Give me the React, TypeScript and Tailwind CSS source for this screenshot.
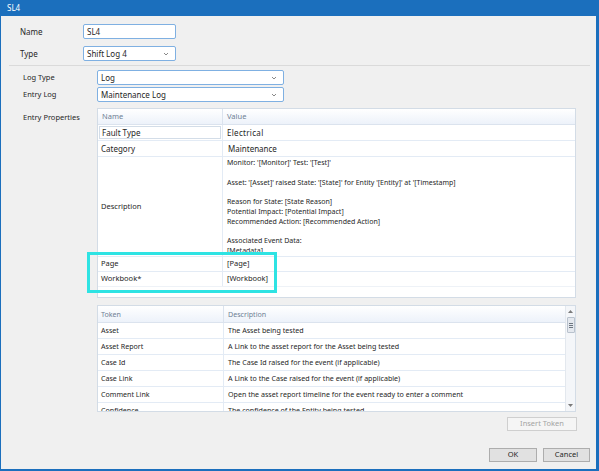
import React from 'react';

const Chevron = () => (
  <svg width="6" height="4" viewBox="0 0 6 4" className="shrink-0">
    <path d="M1 1l2 2 2-2" fill="none" stroke="#6b6b6b" strokeWidth="0.8" />
  </svg>
);

function Field({ value, w, combo }: { value: string; w: string; combo?: boolean }) {
  return (
    <div className={`${w} h-[15px] bg-white border border-[#7fb0e2] rounded-[2px] flex items-center justify-between pl-[3px] pr-[6px] text-[8px] text-[#262626]`}>
      <span>{value}</span>
      {combo && <Chevron />}
    </div>
  );
}

const descLines = [
  "Monitor: '[Monitor]' Test: '[Test]'",
  '',
  "Asset: '[Asset]' raised State: '[State]' for Entity '[Entity]' at '[Timestamp]",
  '',
  'Reason for State: [State Reason]',
  'Potential Impact: [Potential Impact]',
  'Recommended Action: [Recommended Action]',
  '',
  'Associated Event Data:',
  '[Metadata]',
];

const tokens = [
  ['Asset', 'The Asset being tested'],
  ['Asset Report', 'A Link to the asset report for the Asset being tested'],
  ['Case Id', 'The Case Id raised for the event (if applicable)'],
  ['Case Link', 'A Link to the Case raised for the event (if applicable)'],
  ['Comment Link', 'Open the asset report timeline for the event ready to enter a comment'],
  ['Confidence', 'The confidence of the Entity being tested'],
];

export default function App() {
  return (
    <div className="w-[599px] h-[471px] bg-[#1b6fbd] flex flex-col font-['Noto_Sans','Open_Sans',sans-serif] overflow-hidden">
      <div className="h-[16px] shrink-0 flex items-center pl-[7px] text-[8px] text-white">SL4</div>

      <div className="flex-1 ml-[1px] mr-[3px] mb-[2px] bg-[#f0f0f0] relative flex flex-col">
        {/* Name / Type */}
        <div className="mt-[8px] pl-[19px] flex items-center">
          <div className="w-[63px] text-[8px] text-[#262626]">Name</div>
          <Field value="SL4" w="w-[93px]" />
        </div>
        <div className="mt-[7px] pl-[19px] flex items-center">
          <div className="w-[63px] text-[8px] text-[#262626]">Type</div>
          <Field value="Shift Log 4" w="w-[93px]" combo />
        </div>

        <div className="mt-[4px] ml-[8px] mr-[6px] h-px bg-[#dadada]" />

        {/* Log Type / Entry Log */}
        <div className="mt-[4px] pl-[22px] flex items-center">
          <div className="w-[74px] text-[7.5px] text-[#262626]">Log Type</div>
          <Field value="Log" w="w-[187px]" combo />
        </div>
        <div className="mt-[2px] pl-[22px] flex items-center">
          <div className="w-[74px] text-[7.5px] text-[#262626]">Entry Log</div>
          <Field value="Maintenance Log" w="w-[187px]" combo />
        </div>

        {/* Entry Properties */}
        <div className="mt-[6px] pl-[22px] flex">
          <div className="w-[74px] pt-[4px] text-[7.5px] text-[#262626]">Entry Properties</div>
          <div className="w-[480px] flex flex-col">
            {/* properties table */}
            <div className="w-[479px] h-[190px] bg-white border border-[#d3dce6] flex flex-col overflow-hidden text-[7.5px] text-[#262626]">
              <div className="h-[16px] shrink-0 flex bg-gradient-to-b from-white to-[#edf2fa] border-b border-[#dbe3ee] text-[#6f7f94]">
                <div className="w-[125px] border-r border-[#dbe3ee] pl-[4px] flex items-center">Name</div>
                <div className="flex-1 pl-[4px] flex items-center">Value</div>
              </div>
              <div className="h-[16px] shrink-0 flex border-b border-[#e3ebf5]">
                <div className="w-[125px] border-r border-[#e3ebf5] p-[1px]">
                  <div className="h-full border border-[#d3dde8] bg-white pl-[2px] flex items-center text-[8px]">Fault Type</div>
                </div>
                <div className="flex-1 pl-[4px] flex items-center text-[8px] tracking-[0.3px]">Electrical</div>
              </div>
              <div className="h-[16px] shrink-0 flex border-b border-[#e3ebf5] text-[8px]">
                <div className="w-[125px] border-r border-[#e3ebf5] pl-[3px] flex items-center">Category</div>
                <div className="flex-1 pl-[5px] flex items-center">Maintenance</div>
              </div>
              <div className="h-[100px] shrink-0 flex border-b border-[#e3ebf5]">
                <div className="w-[125px] border-r border-[#e3ebf5] pl-[3px] flex items-center">Description</div>
                <div className="flex-1 pl-[4px] pt-[1px] overflow-hidden text-[7px] leading-[9.8px]">
                  {descLines.map((l, i) => (
                    <div key={i} className="h-[9.8px] whitespace-nowrap">{l}</div>
                  ))}
                </div>
              </div>
              <div className="h-[15px] shrink-0 flex border-b border-[#e3ebf5]">
                <div className="w-[125px] border-r border-[#e3ebf5] pl-[3px] flex items-center">Page</div>
                <div className="flex-1 pl-[4px] flex items-center">[Page]</div>
              </div>
              <div className="h-[15px] shrink-0 flex border-b border-[#eef2f7]">
                <div className="w-[125px] border-r border-[#e3ebf5] pl-[3px] flex items-center">Workbook*</div>
                <div className="flex-1 pl-[4px] flex items-center">[Workbook]</div>
              </div>
            </div>

            {/* token table */}
            <div className="mt-[7px] w-[479px] h-[107px] bg-white border border-[#d3dce6] flex overflow-hidden text-[7.1px] text-[#262626]">
              <div className="flex-1 flex flex-col overflow-hidden">
                <div className="h-[17px] shrink-0 flex bg-gradient-to-b from-white to-[#edf2fa] border-b border-[#dbe3ee] text-[#6f7f94]">
                  <div className="w-[126px] border-r border-[#dbe3ee] pl-[3px] flex items-center">Token</div>
                  <div className="flex-1 pl-[4px] flex items-center">Description</div>
                </div>
                {tokens.map(([t, d]) => (
                  <div key={t} className="h-[16px] shrink-0 flex border-b border-[#e3ebf5]">
                    <div className="w-[126px] border-r border-[#e3ebf5] pl-[3px] flex items-center whitespace-nowrap">{t}</div>
                    <div className="flex-1 pl-[4px] flex items-center whitespace-nowrap">{d}</div>
                  </div>
                ))}
              </div>
              <div className="w-[10px] shrink-0 bg-[#f4f6f9] border-l border-[#e3e8ee] flex flex-col items-center">
                <div className="h-[11px] flex items-center justify-center">
                  <svg width="5" height="3" viewBox="0 0 5 3"><path d="M0 3L2.5 0 5 3z" fill="#7a7a7a" /></svg>
                </div>
                <div className="w-[8px] h-[16px] bg-[#e4e8ee] border border-[#b9c2cd] rounded-[1px] flex flex-col items-center justify-center gap-[1px]">
                  <div className="w-[4px] h-px bg-[#6d7680]" />
                  <div className="w-[4px] h-px bg-[#6d7680]" />
                  <div className="w-[4px] h-px bg-[#6d7680]" />
                </div>
                <div className="flex-1" />
                <div className="h-[11px] flex items-center justify-center">
                  <svg width="5" height="3" viewBox="0 0 5 3"><path d="M0 0L2.5 3 5 0z" fill="#7a7a7a" /></svg>
                </div>
              </div>
            </div>

            <div className="mt-[5px] flex justify-end">
              <div className="w-[70px] h-[14px] bg-[#f5f5f5] border border-[#cfcfcf] flex items-center justify-center text-[7.5px] text-[#a3a3a3]">
                Insert Token
              </div>
            </div>
          </div>
        </div>

        <div className="mt-[17px] pr-[6px] flex justify-end gap-[6px] text-[7.5px] text-[#262626]">
          <div className="w-[48px] h-[14px] bg-[#e1e1e1] border border-[#adadad] flex items-center justify-center">OK</div>
          <div className="w-[47px] h-[14px] bg-[#e1e1e1] border border-[#adadad] flex items-center justify-center">Cancel</div>
        </div>

        {/* highlight overlay */}
        <div className="absolute left-[86px] top-[236px] w-[190px] h-[41px] border-[3px] border-[#2ee3e3]" />
      </div>
    </div>
  );
}
